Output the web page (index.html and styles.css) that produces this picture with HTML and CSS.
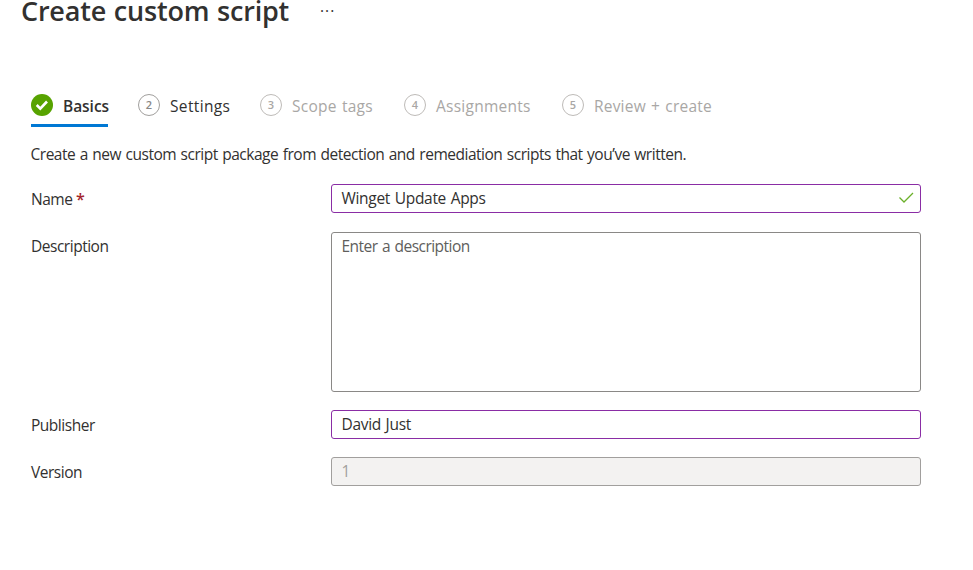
FILE: index.html
```
<!DOCTYPE html>
<html lang="en"><head><meta charset="utf-8"><title>Create custom script</title><link rel="stylesheet" href="styles.css"></head>
<body>
<header class="header"><h1>Create custom script</h1><span class="more">···</span></header>
<nav class="steps">
<div class="step s1 active"><svg class="done" viewBox="0 0 22 22"><circle cx="11" cy="11" r="11"/><path d="M5.7 11l3.6 3.7 6.7-7.2"/></svg><span>Basics</span></div>
<div class="step s2"><i>2</i><span>Settings</span></div>
<div class="step s3 off"><i>3</i><span>Scope tags</span></div>
<div class="step s4 off"><i>4</i><span>Assignments</span></div>
<div class="step s5 off"><i>5</i><span>Review + create</span></div>
</nav>
<p class="intro">Create a new custom script package from detection and remediation scripts that you’ve written.</p>
<main class="form">
<div class="row"><label>Name <b>*</b></label><div class="field edited"><span>Winget Update Apps</span><svg class="check" viewBox="0 0 16 12"><path d="M1.5 5.5l4.5 4.5L15 1"/></svg></div></div>
<div class="row tall"><label>Description</label><div class="field hint">Enter a description</div></div>
<div class="row"><label>Publisher</label><div class="field edited">David Just</div></div>
<div class="row"><label>Version</label><div class="field disabled">1</div></div>
</main>
</body></html>
```
FILE: styles.css
```
* { box-sizing: border-box; }
body { margin: 0; height: 570px; overflow: hidden; background: #fff; color: #323130; font: 15.5px/20px "Open Sans", "Noto Sans", sans-serif; letter-spacing: -.48px; word-spacing: .9px; }
.header { display: flex; height: 94px; padding-left: 21px; }
h1 { margin: 0; width: 299px; font-size: 27px; line-height: 22px; font-weight: 600; letter-spacing: -.2px; word-spacing: 1px; white-space: nowrap; }
.more { line-height: 22px; letter-spacing: 1px; }
.steps { display: flex; height: 33px; padding-left: 31px; white-space: nowrap; letter-spacing: .25px; word-spacing: 1px; }
.step { display: flex; gap: 10px; line-height: 24px; }
.step i { width: 22px; height: 22px; border: 1.4px solid #a19f9d; border-radius: 50%; color: #8a8886; font-style: normal; font-size: 11px; font-weight: 600; line-height: 20px; text-align: center; letter-spacing: 0; }
.s1 { width: 77px; margin-right: 30px; border-bottom: 3px solid #0078d4; font-weight: 600; letter-spacing: -.05px; }
.s2 { width: 122px; letter-spacing: .35px; }
.s3 { width: 144px; }
.s4 { width: 158px; }
.s5 { letter-spacing: .2px; }
.off { color: #a9a7a5; }
.step.off i { border-color: #bebbb8; color: #a9a7a5; }
.done { width: 22px; height: 22px; flex: none; fill: #57a300; }
.done path { fill: none; stroke: #fff; stroke-width: 2.6; }
.intro { margin: 17px 0 20px 30.5px; height: 20px; white-space: nowrap; }
.form { width: 890px; margin-left: 31px; }
.row { display: grid; grid-template-columns: 300px 590px; height: 29px; margin-bottom: 18px; }
.row:first-child { margin-bottom: 19px; }
.tall { height: 160px; }
label { padding-top: 5px; }
.tall label { padding-top: 4px; }
.row b { margin-left: -1px; color: #a4262c; font-weight: 600; font-size: 16px; line-height: 18px; }
.field { display: flex; justify-content: space-between; border: 1px solid #8a8886; border-radius: 3px; padding: 3px 6px 0 9.5px; }
.edited { border-color: #8a2da5; letter-spacing: -.3px; }
.hint { color: #605e5c; letter-spacing: -.52px; }
.disabled { border-color: #a19f9d; background: #f3f2f1; color: #a19f9d; }
.check { width: 16px; height: 12px; margin-top: 4px; fill: none; stroke: #6bb02a; stroke-width: 1.3; }
```
